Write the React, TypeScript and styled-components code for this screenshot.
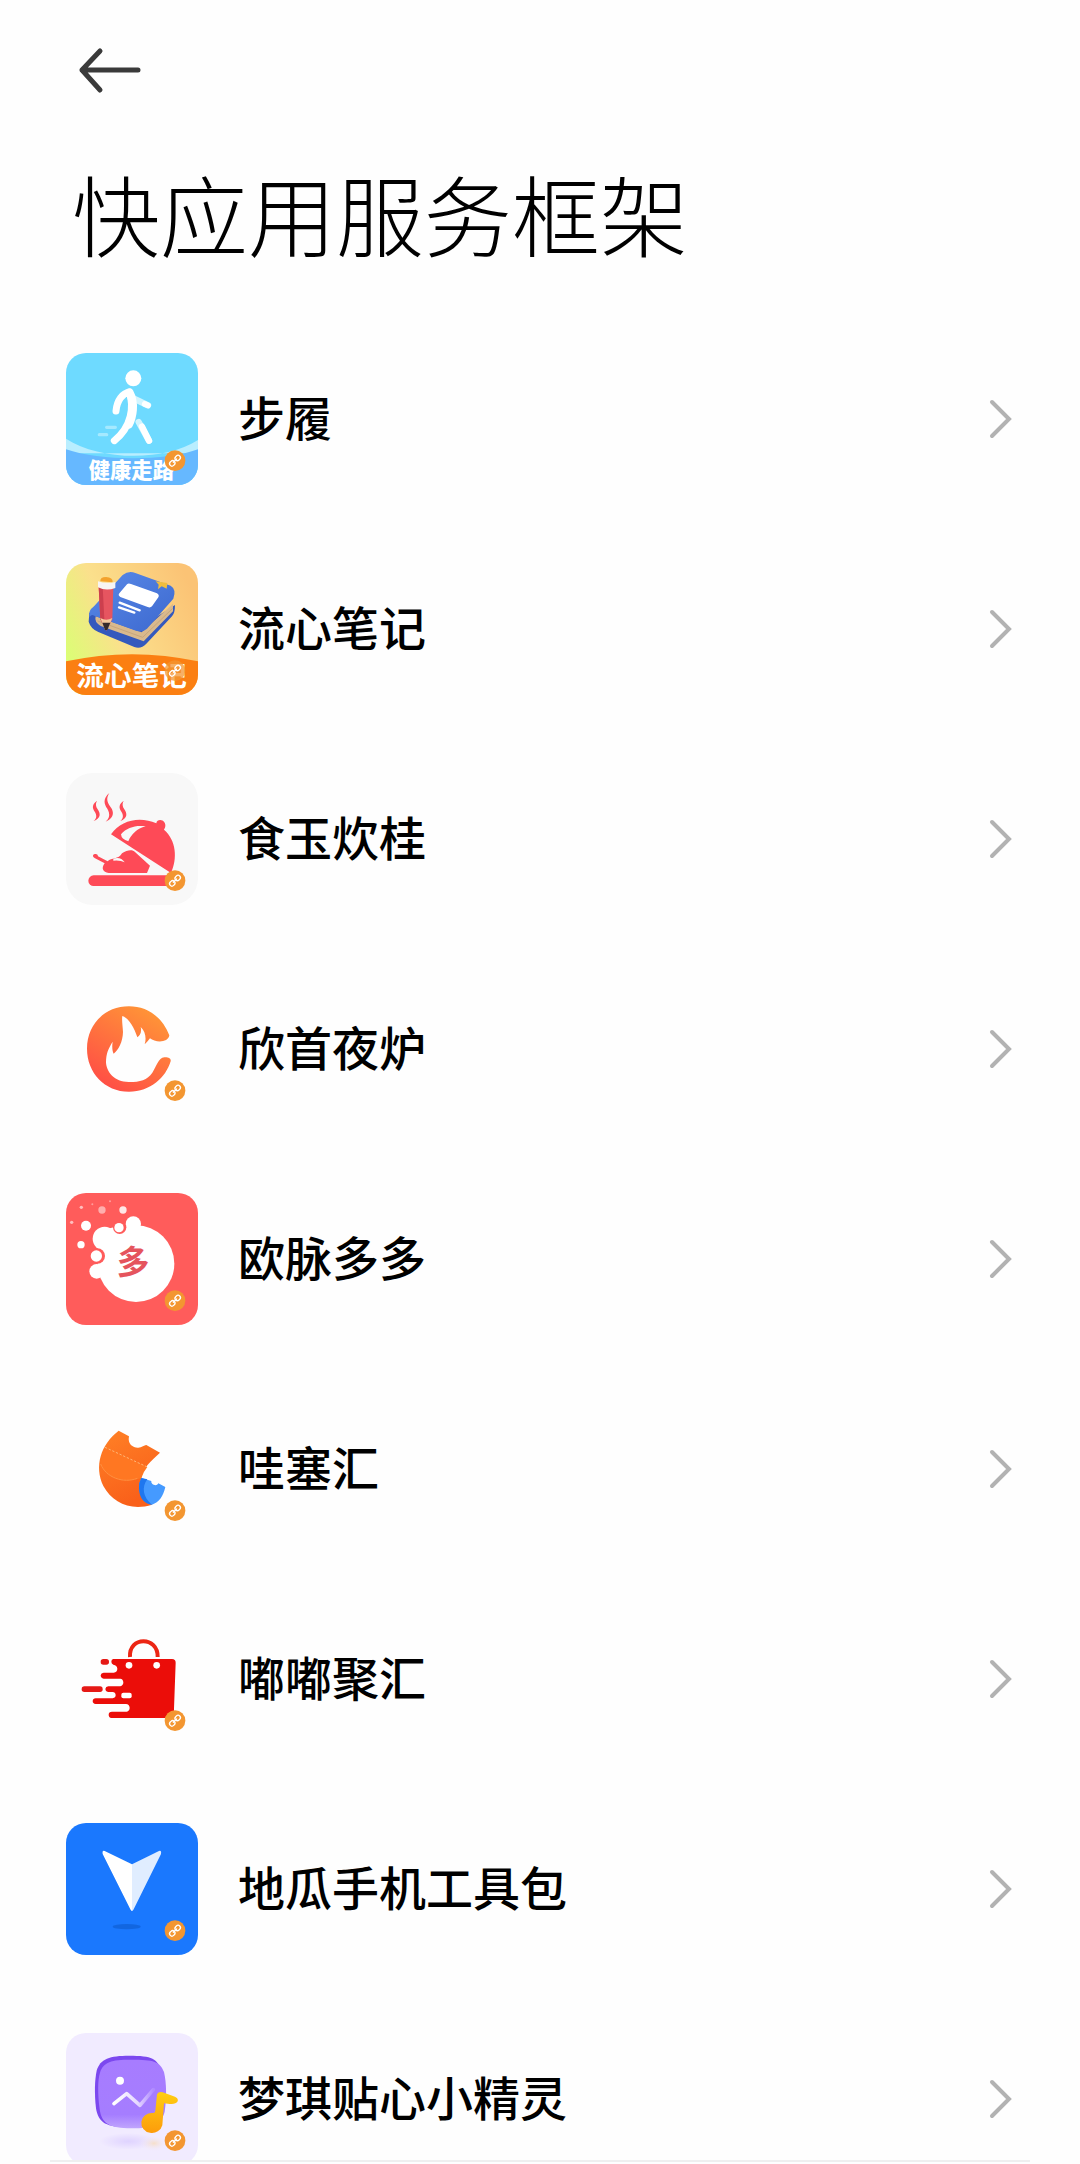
import React from "react";
import type { ReactNode } from "react";
import styled, { createGlobalStyle } from "styled-components";

const GlobalStyle = createGlobalStyle`
  *, *::before, *::after { box-sizing: border-box; }
  body {
    margin: 0;
    background: #fefefe;
    color: #000;
    font-family: "Noto Sans CJK SC", sans-serif;
  }
`;

const Screen = styled.div`
  display: flex;
  flex-direction: column;
  height: 100vh;
  overflow: hidden;
`;

const Header = styled.header`
  display: flex;
  flex-direction: column;
  align-items: flex-start;
  flex: none;
  gap: 50px;
  padding: 40px 72px;
`;

const BackButton = styled.button`
  display: flex;
  padding: 0;
  border: 0;
  background: none;
  color: #3a3a3a;
  cursor: pointer;
`;

const Title = styled.h1`
  margin: 0;
  font-size: 88px;
  font-weight: 300;
  line-height: 124px;
`;

const List = styled.ul`
  flex: 1;
  min-height: 0;
  margin: 0;
  padding: 0;
  list-style: none;
  overflow-y: auto;
  scrollbar-width: none;
`;

const RowLink = styled.a`
  display: flex;
  align-items: center;
  gap: 40px;
  height: 210px;
  padding: 0 56px 0 66px;
  color: inherit;
  text-decoration: none;
`;

const AppIcon = styled.svg`
  flex: none;
  width: 132px;
  height: 132px;
  border-radius: 20px;
`;

const AppName = styled.span`
  flex: 1;
  padding-bottom: 6px;
  font-size: 47px;
  font-weight: 500;
  line-height: 68px;
`;

const Chevron = styled.svg`
  flex: none;
  color: #b2b2b2;
`;

const BottomEdge = styled.footer`
  flex: none;
  height: 4px;
  margin: 0 50px;
  border-top: 2px solid #efefef;
`;

const glyphFont = '"Noto Sans CJK SC", sans-serif';

function LinkBadge({ faded = false }: { faded?: boolean }) {
  return (
    <g>
      <circle cx="375" cy="362" r="31" fill="#f39631" opacity={faded ? 0.75 : 1} />
      <g transform="rotate(-45 375 362)" fill="none" stroke="#fff" strokeWidth="4" strokeLinecap="round">
        <rect x="355" y="355" width="17" height="14" rx="7" />
        <rect x="378" y="355" width="17" height="14" rx="7" />
        <path d="M368 362h14" />
      </g>
    </g>
  );
}

const walking = (
  <>
    <rect x="48" y="39" width="396" height="396" fill="#6edaff" />
    <path d="M48 296C150 362 340 366 444 300V340H48Z" fill="#b9eeff" />
    <path d="M48 328C150 364 350 364 444 328V435H48Z" fill="#66b8ff" />
    <path d="M170 262h26M148 284h22" stroke="#a5e9ff" strokeWidth="10" strokeLinecap="round" />
    <path d="M252 176L294 196M266 246L297 302" stroke="#d3f5ff" strokeWidth="19" strokeLinecap="round" />
    <path d="M276 260L297 302" stroke="#fff" strokeWidth="19" strokeLinecap="round" />
    <path d="M284 192l10 4" stroke="#fff" strokeWidth="17" strokeLinecap="round" />
    <circle cx="250" cy="115" r="24" fill="#fff" />
    <path d="M198 213C201 180 218 160 238 157C252 198 246 260 193 302" fill="none" stroke="#fff" strokeWidth="21" strokeLinecap="round" strokeLinejoin="round" />
    <path d="M238 157C256 190 248 230 236 254" fill="none" stroke="#fff" strokeWidth="25" strokeLinecap="round" />
    <text x="116" y="415" fontFamily={glyphFont} fontSize="64" fontWeight="900" fill="#fff">健康走路</text>
  </>
);

const notebook = (
  <>
    <defs>
      <linearGradient id="noteBg" x1="0" y1="0.75" x2="1" y2="0.3">
        <stop offset="0" stopColor="#daff74" />
        <stop offset="0.4" stopColor="#fbe08c" />
        <stop offset="1" stopColor="#fbc375" />
      </linearGradient>
      <linearGradient id="noteCover" x1="0" y1="0" x2="1" y2="1">
        <stop offset="0" stopColor="#5a8ae8" />
        <stop offset="1" stopColor="#3c68cf" />
      </linearGradient>
    </defs>
    <rect x="48" y="39" width="396" height="396" fill="url(#noteBg)" />
    <path d="M118 188L116 215Q122 236 145 246L253 291Q273 298 289 281L366 199Q375 190 375 165L290 220Z" fill="#3459bd" />
    <path d="M137 199L275 247L369 161V184L281 274L152 228Q132 216 137 199Z" fill="#d9b98d" />
    <path d="M143 213L278 262L368 175" fill="none" stroke="#c7a67c" strokeWidth="3" />
    <path d="M218 75Q236 61 256 69L362 107Q380 118 370 146L291 236Q278 248 258 242L133 197Q124 191 119 201Q112 184 132 169Z" fill="url(#noteCover)" />
    <path d="M231 103Q235 99 243 102L321 130Q329 135 325 142L306 169Q301 174 293 171L211 141Q203 136 208 130Z" fill="#fff" />
    <path d="M209 158L269 181M207 172L253 188" stroke="#fff" strokeWidth="7" strokeLinecap="round" />
    <path d="M317 94L352 99L350 116L335 109L324 118L326 104Z" fill="#f1bd3d" />
    <path d="M146 110H190L187 208L169 242L151 208Z" fill="#e65560" />
    <path d="M146 110H158L163 207L169 242L151 208Z" fill="#cc3f4e" />
    <path d="M151 204Q169 214 187 204L173 238H164Z" fill="#f3c99c" />
    <path d="M157 218H181L172 240H165Z" fill="#352b2c" />
    <path d="M151 94Q150 81 168 81Q189 82 188 97Z" fill="#f3a22c" />
    <path d="M144 94Q168 102 196 96V114Q168 124 144 112Z" fill="#f7f4f3" />
    <path d="M48 334Q246 291 444 334V435H48Z" fill="#fb7f12" />
    <text x="79" y="409" fontFamily={glyphFont} fontSize="83" fontWeight="700" fill="#fff">流心笔记</text>
  </>
);

const cloche = (
  <>
    <rect x="48" y="39" width="396" height="396" rx="80" fill="#f8f8f8" />
    <g fill="#fe4a57">
      <path d="M141 122C122 136 129 147 136 158C141 169 139 176 130 184C155 174 151 160 143 148C137 139 136 131 141 122Z" />
      <path d="M178 99C158 116 162 132 172 146C181 162 179 174 167 185C197 171 190 151 181 140C170 125 169 113 178 99Z" />
      <path d="M221 122C202 136 209 147 216 158C221 169 219 176 210 184C235 174 231 160 223 148C217 139 216 131 221 122Z" />
      <path d="M183 223C213 179 271 168 319 190C320 178 337 177 343 187C349 196 345 205 342 209C379 241 383 295 363 339Z" />
      <rect x="115" y="346" width="265" height="32" rx="16" />
      <path d="M132 283C140 281 143 284 144 289L173 304C184 293 206 299 216 280C231 270 247 267 255 276L300 317L291 339H176C158 337 153 324 164 310L135 295C128 291 127 286 132 283Z" />
    </g>
    <path d="M213 223C231 202 257 195 287 199C261 206 244 222 235 244Q214 238 213 223Z" fill="#f8f8f8" />
    <path d="M190 296Q212 289 224 307Q211 300 190 302Z" fill="#f8f8f8" />
  </>
);

const flame = (
  <>
    <defs>
      <linearGradient id="flameRing" x1="0.85" y1="0" x2="0.25" y2="1">
        <stop offset="0" stopColor="#ff9a36" />
        <stop offset="1" stopColor="#ff4c46" />
      </linearGradient>
    </defs>
    <path d="M358 196C335 136 287 109 237 109C162 109 111 166 111 236C111 308 164 365 237 365C302 365 347 323 362 274C364 263 352 262 343 262C325 264 319 290 307 308C292 330 270 336 238 336C194 337 169 306 168 277C168 250 176 234 188 215C185 233 188 247 191 251C206 239 218 216 219 186C218 166 215 151 217 138C238 145 253 175 262 202C270 197 276 186 272 171C286 183 290 206 284 223C292 216 296 210 300 205C316 219 355 219 358 196Z" fill="url(#flameRing)" />
  </>
);

const bubbles = (
  <>
    <rect x="48" y="39" width="396" height="396" fill="#ff5c5b" />
    <g fill="#fff">
      <circle cx="258" cy="251" r="115" />
      <circle cx="164" cy="176" r="36" />
      <circle cx="250" cy="132" r="23" />
      <circle cx="140" cy="274" r="22" />
      <path d="M158 150L240 130L272 150L160 270L145 200Z" />
      <circle cx="108" cy="137" r="15" />
      <circle cx="93" cy="194" r="11" />
      <circle cx="219" cy="90" r="11" opacity="0.85" />
      <circle cx="156" cy="90" r="11" opacity="0.5" />
      <circle cx="94" cy="82" r="5" opacity="0.6" />
      <circle cx="65" cy="127" r="5" opacity="0.6" />
      <circle cx="127" cy="73" r="3" opacity="0.4" />
      <circle cx="180" cy="64" r="3" opacity="0.4" />
    </g>
    <circle cx="209" cy="142" r="20" fill="#ff5c5b" />
    <circle cx="207" cy="143" r="14" fill="#fff" />
    <circle cx="142" cy="228" r="23" fill="#ff5c5b" />
    <circle cx="139" cy="228" r="17" fill="#fff" />
    <text x="200" y="281" fontFamily={glyphFont} fontSize="98" fontWeight="700" fill="#e5545d">多</text>
  </>
);

const bite = (
  <>
    <defs>
      <linearGradient id="biteBody" x1="0" y1="0" x2="0.4" y2="1">
        <stop offset="0" stopColor="#ff8126" />
        <stop offset="1" stopColor="#f9601a" />
      </linearGradient>
    </defs>
    <path d="M206 122L237 139C232 163 249 173 263 173C275 174 284 164 289 165L330 188C304 211 277 236 274 264L306 344C243 364 187 338 160 288C132 229 152 163 206 122Z" fill="url(#biteBody)" />
    <path d="M152 222C158 182 162 176 170 174L292 231Q279 247 274 264C220 281 168 263 152 222Z" fill="#ff7722" />
    <path d="M165 172L292 231" stroke="#ffb574" strokeWidth="3" strokeDasharray="7 5" fill="none" />
    <path d="M152 222C168 263 220 281 262 265" stroke="#ff9040" strokeWidth="3" fill="none" />
    <path d="M274 264L304 273C302 284 320 291 325 280L346 291C340 319 327 337 306 344C280 342 264 313 268 279Z" fill="#459aff" />
    <path d="M274 264L292 268C274 291 279 323 306 344C272 339 264 309 268 279Z" fill="#1f77ef" />
  </>
);

const bag = (
  <>
    <path d="M240 171C236 108 324 108 323 171" fill="none" stroke="#ec2614" strokeWidth="12" />
    <path d="M190 177H366Q377 177 377 188L371 354H184Q176 353 176 344Q176 335 186 335H230Q239 332 239 323Q238 313 228 312H137Q128 311 128 303Q129 295 137 295H188Q197 293 197 285Q196 276 188 276H174Q166 274 166 267Q167 260 175 259H211Q220 256 220 247Q219 237 211 236H161Q152 235 152 226Q153 219 161 218H191Q202 216 202 206Q201 195 190 194Q184 191 184 185Q184 178 190 177Z" fill="#eb0d09" />
    <rect x="152" y="177" width="25" height="17" rx="8" fill="#e51916" />
    <rect x="95" y="259" width="63" height="17" rx="8" fill="#e51916" />
    <rect x="214" y="278" width="31" height="17" rx="6" fill="#fff" />
    <circle cx="237" cy="196" r="10" fill="#fff" />
    <circle cx="320" cy="196" r="10" fill="#fff" />
  </>
);

const arrowhead = (
  <>
    <rect x="48" y="39" width="396" height="396" fill="#1a78fe" />
    <path d="M246 163L164 123Q156 120 158 132L241 298Q243 303 246 303Z" fill="#fff" />
    <path d="M246 163L327 123Q335 120 333 132L251 298Q249 303 246 303Z" fill="#e0edff" />
    <ellipse cx="230" cy="350" rx="42" ry="8" fill="#1266e0" />
  </>
);

const music = (
  <>
    <defs>
      <linearGradient id="musicCard" x1="0" y1="0" x2="0" y2="1">
        <stop offset="0" stopColor="#a77cff" />
        <stop offset="0.8" stopColor="#a57dff" />
        <stop offset="1" stopColor="#c0a5fd" />
      </linearGradient>
      <linearGradient id="musicNote" x1="0" y1="0" x2="0" y2="1">
        <stop offset="0" stopColor="#ffce12" />
        <stop offset="1" stopColor="#fd9c0b" />
      </linearGradient>
      <linearGradient id="musicLine" x1="0" y1="0" x2="1" y2="0">
        <stop offset="0" stopColor="#fff" />
        <stop offset="0.6" stopColor="#e5d8ff" />
        <stop offset="1" stopColor="#b08bff" />
      </linearGradient>
      <radialGradient id="musicShadow">
        <stop offset="0" stopColor="#dfd3ff" />
        <stop offset="1" stopColor="#f1ebff" />
      </radialGradient>
      <radialGradient id="musicGlow">
        <stop offset="0" stopColor="#f6dfca" />
        <stop offset="1" stopColor="#f1ebff" stopOpacity="0" />
      </radialGradient>
    </defs>
    <rect x="48" y="39" width="396" height="396" fill="#f1ebff" />
    <ellipse cx="235" cy="364" rx="88" ry="25" fill="url(#musicShadow)" />
    <ellipse cx="312" cy="370" rx="45" ry="25" fill="url(#musicGlow)" />
    <path d="M237 107C307 107 323 116 332 152C338 190 338 230 334 270C326 310 304 322 237 322C170 322 145 310 138 265C133 220 134 180 140 152C150 116 180 107 237 107Z" fill="#7c48ef" />
    <path d="M242 119C312 119 330 124 342 156C350 190 350 235 344 275C334 313 310 325 244 325C178 325 155 311 149 268C143 220 143 180 150 158C160 126 185 119 242 119Z" fill="url(#musicCard)" />
    <circle cx="210" cy="182" r="12" fill="#fff" />
    <path d="M192 251L230 221L270 256L310 209" fill="none" stroke="url(#musicLine)" strokeWidth="11" strokeLinecap="round" strokeLinejoin="round" />
    <path d="M321 223Q325 214 338 217L375 230Q386 235 383 244Q377 254 359 252L342 250L337 316A32 30 0 1 1 308 279Q315 280 316 272Z" fill="url(#musicNote)" />
  </>
);

interface QuickApp {
  name: string;
  art: ReactNode;
  fadedBadge?: boolean;
}

const apps: QuickApp[] = [
  { name: "步履", art: walking },
  { name: "流心笔记", art: notebook, fadedBadge: true },
  { name: "食玉炊桂", art: cloche },
  { name: "欣首夜炉", art: flame },
  { name: "欧脉多多", art: bubbles },
  { name: "哇塞汇", art: bite },
  { name: "嘟嘟聚汇", art: bag },
  { name: "地瓜手机工具包", art: arrowhead },
  { name: "梦琪贴心小精灵", art: music },
];

export default function App() {
  return (
    <>
      <GlobalStyle />
      <Screen>
        <Header>
          <BackButton type="button" aria-label="返回">
            <svg width="76" height="60" viewBox="0 0 76 60" fill="none" stroke="currentColor" strokeWidth="5" strokeLinecap="round" strokeLinejoin="round">
              <path d="M28 11L10 30L28 50M10 30H66" />
            </svg>
          </BackButton>
          <Title>快应用服务框架</Title>
        </Header>
        <List>
          {apps.map((app) => (
            <li key={app.name}>
              <RowLink href="#">
                <AppIcon viewBox="48 39 396 396" aria-hidden="true">
                  {app.art}
                  <LinkBadge faded={app.fadedBadge} />
                </AppIcon>
                <AppName>{app.name}</AppName>
                <Chevron width="48" height="48" viewBox="0 0 48 48" fill="none" stroke="currentColor" strokeWidth="4" strokeLinecap="round" aria-hidden="true">
                  <path d="M16 7L33 24L16 41" />
                </Chevron>
              </RowLink>
            </li>
          ))}
        </List>
        <BottomEdge />
      </Screen>
    </>
  );
}
